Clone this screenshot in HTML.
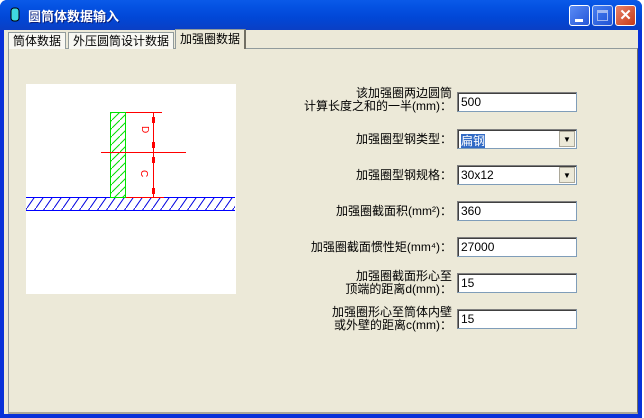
<!DOCTYPE html>
<html><head><meta charset="utf-8"><style>
*{margin:0;padding:0;box-sizing:border-box}
body{width:644px;height:418px;overflow:hidden;background:#fff;font-family:"Liberation Sans","Noto Sans CJK SC",sans-serif;font-size:12px;position:relative}
.win{position:absolute;left:0;top:0;width:642px;height:418px;background:#0831d9;border-radius:7px 7px 0 0}
.title{position:absolute;left:0;top:0;width:642px;height:30px;border-radius:7px 7px 0 0;background:linear-gradient(#0a5ae8,#0553e3 20%,#0147d6 60%,#0a3fc4)}
.title span{position:absolute;left:28px;top:6px;color:#fff;font-weight:bold;font-size:13px;text-shadow:1px 1px #0a1e7a}
.client{position:absolute;left:4px;top:30px;width:634px;height:384px;background:#ece9d8}
.btn{position:absolute;top:5px;width:21px;height:21px;border:1px solid #fff;border-radius:3px;background:linear-gradient(135deg,#5a8cf5,#2556d8)}
.tab{position:absolute;top:32px;height:17px;border:1px solid #919b9c;border-bottom:none;background:#f7f7f2;padding:0 4px;line-height:16px;font-size:12px}
.panel{position:absolute;left:8px;top:48px;width:630px;height:366px;border:1px solid #919b9c;border-right-color:#716f64;border-bottom:2px solid #aca899;background:#ece9d8}
.lbl{position:absolute;right:192px;text-align:right;line-height:13px;font-size:12px}
.inp{position:absolute;left:457px;width:120px;height:20px;background:#fff;border:1px solid #7f9db9;border-top-color:#808080;border-left-color:#808080;box-shadow:inset 1px 1px #404040;padding:2px 0 0 3px;font-size:12px}
.dd{position:absolute;right:1px;top:1px;width:16px;height:16px;background:#ece9d8;border:1px solid #aca899;font-size:8px;text-align:center;line-height:15px}
</style></head><body>
<div class="win">
<div class="title"><svg style="position:absolute;left:9px;top:7px" width="12" height="16"><rect x="2" y="1" width="8" height="13" rx="3" fill="#3fd8e0" stroke="#000"/></svg><span>圆筒体数据输入</span>
<div class="btn" style="left:569px"><div style="position:absolute;left:5px;top:13px;width:8px;height:3px;background:#fff"></div></div>
<div class="btn" style="left:592px;opacity:.8"><div style="position:absolute;left:4px;top:4px;width:11px;height:11px;border:1px solid #c8d4f8;border-top-width:3px"></div></div>
<div class="btn" style="left:615px;background:linear-gradient(135deg,#e8836a,#c73a17)"><div style="color:#fff;font-weight:bold;font-size:15px;text-align:center;line-height:19px">✕</div></div>
</div>
<div class="client"></div>
</div>
<div class="panel">
<div style="position:absolute;left:17px;top:35px;width:210px;height:210px;background:#fff"></div>
</div>
<div class="tab" style="left:8px;">筒体数据</div>
<div class="tab" style="left:68px;">外压圆筒设计数据</div>
<div class="tab" style="left:175px;top:29px;height:20px;background:#ece9d8;border-right:2px solid #716f64;padding-top:1px">加强圈数据</div>
<svg style="position:absolute;left:0;top:0" width="644" height="418">
<defs><pattern id="h1" width="8" height="8" patternUnits="userSpaceOnUse"><path d="M0 8L8 0" stroke="#00e000" stroke-width="1"/></pattern>
<pattern id="h2" width="9" height="13" patternUnits="userSpaceOnUse"><path d="M0 13L9 0" stroke="#0000e0" stroke-width="1"/></pattern></defs>
<rect x="26" y="197" width="209" height="13" fill="url(#h2)"/>
<line x1="26" y1="197.5" x2="235" y2="197.5" stroke="#00f"/>
<line x1="26" y1="210.5" x2="235" y2="210.5" stroke="#00f"/>
<rect x="110.5" y="112.5" width="15" height="85" fill="url(#h1)" stroke="#00e000"/>
<g stroke="#f00" fill="none">
<line x1="126" y1="112.5" x2="162" y2="112.5"/>
<line x1="126" y1="197.5" x2="164" y2="197.5"/>
<line x1="101" y1="152.5" x2="186" y2="152.5"/>
<line x1="153.5" y1="112" x2="153.5" y2="197"/>
</g>
<g fill="#f00"><rect x="152" y="117" width="3" height="6"/><rect x="152" y="142" width="3" height="6"/><rect x="152" y="157" width="3" height="6"/><rect x="152" y="188" width="3" height="6"/></g>
<text x="140" y="134" fill="#f00" font-size="10" transform="rotate(90 145 131)">D</text>
<text x="140" y="179" fill="#f00" font-size="10" transform="rotate(90 145 175)">C</text>
</svg>
<div class="lbl" style="top:87px">该加强圈两边圆筒<br>计算长度之和的一半(mm)：</div>
<div class="inp" style="top:92px">500</div>
<div class="lbl" style="top:133px">加强圈型钢类型：</div>
<div class="inp" style="top:129px"><span style="background:#316ac5;color:#fff">扁钢</span><div class="dd">▼</div></div>
<div class="lbl" style="top:169px">加强圈型钢规格：</div>
<div class="inp" style="top:165px">30x12<div class="dd">▼</div></div>
<div class="lbl" style="top:205px">加强圈截面积(mm²)：</div>
<div class="inp" style="top:201px">360</div>
<div class="lbl" style="top:241px">加强圈截面惯性矩(mm⁴)：</div>
<div class="inp" style="top:237px">27000</div>
<div class="lbl" style="top:270px">加强圈截面形心至<br>顶端的距离d(mm)：</div>
<div class="inp" style="top:273px">15</div>
<div class="lbl" style="top:306px">加强圈形心至筒体内壁<br>或外壁的距离c(mm)：</div>
<div class="inp" style="top:309px">15</div>
</body></html>
